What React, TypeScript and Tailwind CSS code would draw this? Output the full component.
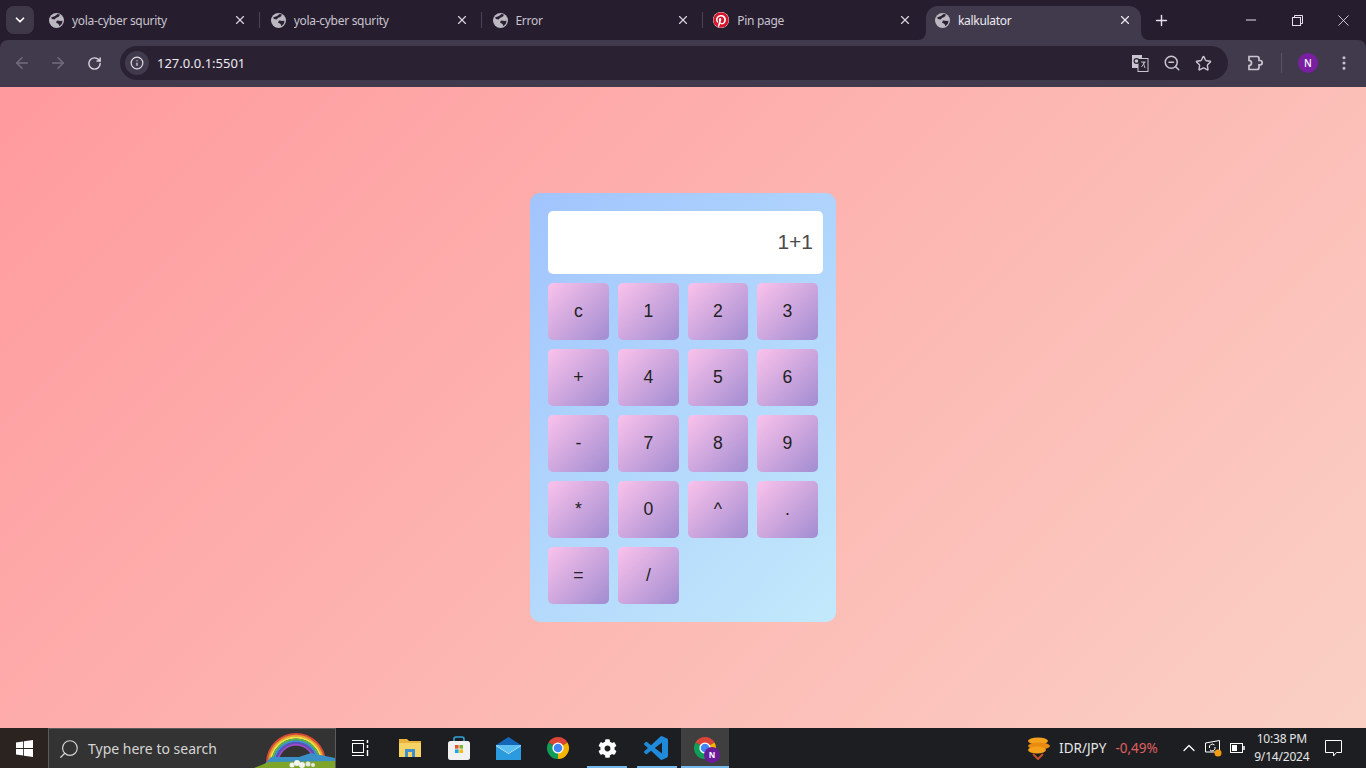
import { ArrowLeft, ArrowRight, ChevronDown, ChevronUp, EllipsisVertical, Info, Minus, Plus, RotateCw, Search, Star, X, ZoomOut } from "lucide-react";
import { FaCog, FaPinterest } from "react-icons/fa";

const keys = ["c", "1", "2", "3", "+", "4", "5", "6", "-", "7", "8", "9", "*", "0", "^", ".", "=", "/"];

const Globe = () => (
  <svg width="15" height="15" viewBox="0 0 15 15" className="shrink-0">
    <circle cx="7.5" cy="7.5" r="7.5" fill="#bcb8c2" />
    <path d="M2 4.5 L6 3 L8.5 1 L11 1.5 L10 3.5 L7 5 L5.5 6.5 L3 6 Z" fill="#2a2233" />
    <path d="M8 7.5 L12 8 L13.5 7.5 L13 10.5 L10.5 13.2 L9.5 11 L7 9.5 Z" fill="#2a2233" />
  </svg>
);

const Tab = ({ title, pin, last }: { title: string; pin?: boolean; last?: boolean }) => (
  <div className={`flex h-full w-[221.75px] shrink-0 items-center text-[#c8c3cd] ${pin ? "pl-[10px]" : "pl-[11px]"}`}>
    {pin ? <FaPinterest className="shrink-0 rounded-full bg-white text-[16px] text-[#d5152b]" /> : <Globe />}
    <span className="ml-2 mt-px flex-1 truncate text-xs tracking-[-0.3px]">{title}</span>
    <X size={14} strokeWidth={2} className="text-[#d8d4dc]" />
    <div className={`ml-3 h-4 w-px ${last ? "bg-transparent" : "bg-[#4b4456]"}`} />
  </div>
);

const TranslateIcon = () => (
  <svg width="18" height="18" viewBox="0 0 18 18">
    <rect x="1" y="1" width="10" height="13" fill="#c9c5ce" />
    <rect x="7" y="4.5" width="10" height="13" fill="#2a2233" stroke="#c9c5ce" strokeWidth="1" />
    <circle cx="5.5" cy="7" r="2.4" fill="none" stroke="#2a2233" strokeWidth="1.2" />
    <path d="M10 8 H14.5 M12 8 L14 14 M14 8 L10.5 13" stroke="#c9c5ce" strokeWidth="0.9" fill="none" />
  </svg>
);

const TabBar = () => (
  <div className="flex h-10 shrink-0 bg-[#261d2f]">
    <div className="ml-[6px] mr-1 mt-[6px] flex h-7 w-7 items-center justify-center rounded-lg bg-[#3f3849] text-white">
      <ChevronDown size={14} strokeWidth={3} />
    </div>
    <div className="flex h-10 items-center">
      <Tab title="yola-cyber squrity" />
      <Tab title="yola-cyber squrity" />
      <Tab title="Error" />
      <Tab title="Pin page" pin last />
    </div>
    <div className="relative ml-px mt-[6px] flex h-[34px] w-[215px] items-center rounded-t-xl bg-[#413a4c] pb-[6px] pl-[9px] pr-[9px] text-[#eeeaf1]">
      <div className="absolute -left-2 bottom-0 h-2 w-2 bg-[#413a4c]">
        <div className="h-full w-full rounded-br-lg bg-[#261d2f]" />
      </div>
      <div className="absolute -right-2 bottom-0 h-2 w-2 bg-[#413a4c]">
        <div className="h-full w-full rounded-bl-lg bg-[#261d2f]" />
      </div>
      <Globe />
      <span className="ml-2 mt-px flex-1 text-xs tracking-[-0.3px]">kalkulator</span>
      <X size={14} strokeWidth={2} />
    </div>
    <div className="flex h-10 flex-1 items-center pl-[12px] text-[#e6e2ea]">
      <Plus size={17} strokeWidth={2} />
      <div className="flex-1" />
      <div className="flex w-[46px] justify-center">
        <Minus size={16} strokeWidth={1.5} />
      </div>
      <div className="flex w-[46px] justify-center">
        <svg width="11" height="11" viewBox="0 0 11 11" fill="none" stroke="currentColor">
          <rect x="0.5" y="2.5" width="8" height="8" />
          <path d="M2.5 2.5 V0.5 H10.5 V8.5 H8.5" />
        </svg>
      </div>
      <div className="flex w-[46px] justify-center">
        <X size={19} strokeWidth={1.1} />
      </div>
    </div>
  </div>
);

const Toolbar = () => (
  <div className="flex h-[47px] shrink-0 items-center rounded-t-lg bg-[#413a4c] pb-px text-[#c9c5ce]">
    <div className="flex w-[120px] items-center pl-[13px]">
      <ArrowLeft size={18} className="text-[#726c7b]" />
      <ArrowRight size={18} className="ml-[18px] text-[#726c7b]" />
      <RotateCw size={15} strokeWidth={2.2} className="ml-[20px] text-[#dcd8e0]" />
    </div>
    <div className="flex h-[34px] w-[1108px] items-center rounded-full bg-[#2a2233] pl-[5px]">
      <div className="flex h-6 w-6 items-center justify-center rounded-full bg-[#413a4c]">
        <Info size={14} className="text-[#e3dfe7]" />
      </div>
      <span className="ml-2 mt-px flex-1 text-[13px] text-[#eeeaf1]">127.0.0.1:5501</span>
      <TranslateIcon />
      <ZoomOut size={18} className="ml-[14px]" />
      <Star size={17} strokeWidth={2} className="ml-[14px] mr-4" />
    </div>
    <svg width="18" height="18" viewBox="0 0 18 18" className="ml-[18px]" fill="none" stroke="currentColor" strokeWidth="1.7">
      <path d="M3 2.5 H11 Q13 2.5 13 4.5 V6.5 H14 a2.2 2.2 0 0 1 0 4.4 H13 V13.5 Q13 15.5 11 15.5 H3 V11.5 a2.4 2.4 0 0 0 0 -5 Z" />
    </svg>
    <div className="ml-[17px] h-5 w-px bg-[#5a5365]" />
    <div className="ml-4 flex h-5 w-5 items-center justify-center rounded-full bg-[#7b1fa2] text-[10px] font-medium text-white">N</div>
    <EllipsisVertical size={18} className="ml-[17px]" />
  </div>
);

const Calculator = () => (
  <div className="w-[306px] rounded-[10px] bg-[linear-gradient(135deg,#a1c4fd,#c2e9fb)] p-[18px] [font-family:'Liberation_Sans',Arial,sans-serif]">
    <div className="flex h-[63px] w-[275px] items-center justify-end rounded-[5px] bg-white pb-[2px] pr-[10px] text-[21px] text-[#4a4a4a]">1+1</div>
    <div className="mt-[9px] grid grid-cols-[61px_61px_60px_61px] gap-[9px]">
      {keys.map((key) => (
        <button key={key} className="flex h-[57px] items-center justify-center rounded-[5px] bg-[linear-gradient(135deg,#fbc2eb,#a18cd1)] pb-px text-[17.6px] text-[#222]">
          {key}
        </button>
      ))}
    </div>
  </div>
);

const Rainbow = () => (
  <svg width="81" height="39" viewBox="255 729 81 39" className="absolute bottom-0 right-0" fill="none">
    {["#d8483a", "#ef9a2e", "#f1e24a", "#5cb84c", "#3f8fd8", "#5b4fc0", "#9a4cc4"].map((color, i) => (
      <circle key={color} cx="297" cy="763" r={29 - i * 1.8} stroke={color} strokeWidth="2" />
    ))}
    <path d="M262 768 L272 757 L300 757 L312 753 L336 758 V768 Z" fill="#3b8fc7" />
    <path d="M255 768 L270 762 L336 761 V768 Z" fill="#7ea52a" />
    <circle cx="298" cy="763" r="3" fill="#f4f4f0" />
    <circle cx="303" cy="765" r="3" fill="#f4f4f0" />
    <circle cx="293" cy="765" r="2.5" fill="#f4f4f0" />
    <circle cx="309" cy="764" r="2.5" fill="#e9e9e2" />
    <circle cx="314" cy="765" r="2" fill="#e9e9e2" />
  </svg>
);

const ChromeIcon = ({ badge }: { badge?: boolean }) => (
  <div className="relative h-6 w-6">
    <svg width="24" height="24" viewBox="0 0 24 24">
      <path d="M12 12 L2.47 6.5 A11 11 0 0 1 21.53 6.5 Z" fill="#db4437" />
      <path d="M12 12 L21.53 6.5 A11 11 0 0 1 12 23 Z" fill="#f4b400" />
      <path d="M12 12 L12 23 A11 11 0 0 1 2.47 6.5 Z" fill="#0f9d58" />
      <circle cx="12" cy="12" r="5.6" fill="#fff" />
      <circle cx="12" cy="12" r="4.3" fill="#4285f4" />
    </svg>
    {badge && (
      <div className="absolute -bottom-[3px] -right-[3px] flex h-4 w-4 items-center justify-center rounded-full bg-[#6a1b9a] text-[8px] font-bold text-white">N</div>
    )}
  </div>
);

const TaskCell = ({ children, open }: { children: React.ReactNode; open?: boolean }) => (
  <div className="relative flex h-full w-[49.3px] shrink-0 items-center justify-center">
    {children}
    {open && <div className="absolute bottom-0 left-[5px] h-[2px] w-10 bg-[#76b9ed]" />}
  </div>
);

const Taskbar = () => (
  <div className="flex h-10 shrink-0 items-center bg-[#1d1e22] text-white">
    <div className="flex h-full w-12 items-center justify-center bg-[#2a2320]">
      <svg width="17" height="17" viewBox="0 0 17 17" fill="#fff">
        <path d="M0 2.4 L7.2 1.4 V8 H0 Z M8 1.3 L17 0 V8 H8 Z M0 9 H7.2 V15.6 L0 14.6 Z M8 9 H17 V17 L8 15.7 Z" />
      </svg>
    </div>
    <div className="relative flex h-full w-[288px] items-center border border-b-0 border-[#5a5a5a] bg-[#333] pl-[9px] text-[#d5d5d5]">
      <Search size={22} strokeWidth={1.3} className="-scale-x-100" />
      <span className="ml-2 text-sm">Type here to search</span>
      <Rainbow />
    </div>
    <TaskCell>
      <svg width="17" height="16" viewBox="0 0 17 16" fill="none" stroke="#fff">
        <path d="M0 0.5 H12 M0 15.5 H12" />
        <rect x="0.5" y="3.5" width="11" height="9" />
        <path d="M15.5 0 V3 M15.5 5 V8 M15.5 10 V16" strokeWidth="1.4" />
      </svg>
    </TaskCell>
    <TaskCell>
      <svg width="22" height="20" viewBox="0 0 22 20">
        <path d="M0 1 H8 L10 3 H22 V19 H0 Z" fill="#e9b23c" />
        <path d="M0 5 H22 V19 H0 Z" fill="#f6d365" />
        <path d="M6 19 V11 H16 V19 H13 V14 H9 V19 Z" fill="#3f8fd0" />
      </svg>
    </TaskCell>
    <TaskCell>
      <svg width="22" height="24" viewBox="0 0 22 24">
        <path d="M6 6 V3 Q6 1 8 1 H14 Q16 1 16 3 V6" fill="none" stroke="#35a3dc" strokeWidth="1.6" />
        <rect x="0" y="5" width="22" height="19" rx="2.5" fill="#f1f1f1" />
        <rect x="7" y="9" width="3.6" height="3.6" fill="#e8522e" />
        <rect x="11.4" y="9" width="3.6" height="3.6" fill="#7bb52b" />
        <rect x="7" y="13.4" width="3.6" height="3.6" fill="#1fa3e8" />
        <rect x="11.4" y="13.4" width="3.6" height="3.6" fill="#f5b90f" />
      </svg>
    </TaskCell>
    <TaskCell>
      <svg width="25" height="23" viewBox="0 0 25 23">
        <path d="M0 8 L12.5 0 L25 8 V10 H0 Z" fill="#1565b8" />
        <rect x="0" y="8" width="25" height="15" fill="#2b9be0" />
        <path d="M0 8 L12.5 16 L25 8 V9 L12.5 17 L0 9 Z" fill="#d7effb" />
        <path d="M0 8 L12.5 16 L25 8 Z" fill="#5cc1f2" />
      </svg>
    </TaskCell>
    <TaskCell>
      <ChromeIcon />
    </TaskCell>
    <TaskCell open>
      <FaCog size={19} />
    </TaskCell>
    <TaskCell open>
      <svg width="24" height="24" viewBox="0 0 24 24" fill="#1f8ad9">
        <path d="M23.15 2.587L18.21.21a1.494 1.494 0 0 0-1.705.29l-9.46 8.63-4.12-3.128a.999.999 0 0 0-1.276.057L.327 7.261A1 1 0 0 0 .326 8.74L3.899 12 .326 15.26a1 1 0 0 0 .001 1.479L1.65 17.94a.999.999 0 0 0 1.276.057l4.12-3.128 9.46 8.63a1.492 1.492 0 0 0 1.704.29l4.942-2.377A1.5 1.5 0 0 0 24 20.06V3.939a1.5 1.5 0 0 0-.85-1.352zm-5.146 14.861L10.826 12l7.178-5.448v10.896z" />
      </svg>
    </TaskCell>
    <div className="relative flex h-full w-12 shrink-0 items-center justify-center bg-[#3f3f3f]">
      <ChromeIcon badge />
      <div className="absolute bottom-0 left-0 right-0 h-[2px] bg-[#76b9ed]" />
    </div>
    <div className="flex h-full flex-1 items-center pl-[297px]">
      <svg width="24" height="24" viewBox="0 0 24 24" className="shrink-0">
        <ellipse cx="12" cy="5" rx="10" ry="3.5" fill="#f5a11c" />
        <ellipse cx="13" cy="10" rx="11" ry="3.5" fill="#e98b12" />
        <ellipse cx="11" cy="14" rx="9" ry="3.5" fill="#f5a11c" />
        <path d="M7 18 L12 23 L17 18" fill="none" stroke="#c6502a" strokeWidth="2" />
      </svg>
      <span className="ml-[9px] text-[13.5px] text-[#e6e6e6]">IDR/JPY</span>
      <span className="ml-[9px] text-[13.5px] text-[#e0605f]">-0,49%</span>
      <ChevronUp size={20} strokeWidth={1.5} className="ml-[21px] shrink-0" />
      <svg width="18" height="18" viewBox="0 0 18 18" className="ml-[5px] shrink-0" fill="none" stroke="#fff">
        <path d="M1.5 4 L15.5 1.5 V13 H1.5 Z" />
        <path d="M5.5 9 A3 3 0 0 1 10.5 6 M11 8 A3 3 0 0 1 6 11" />
        <circle cx="14" cy="14" r="3.5" fill="#f39c12" stroke="none" />
      </svg>
      <svg width="15" height="10" viewBox="0 0 15 10" className="ml-[8px] shrink-0" fill="none" stroke="#fff">
        <rect x="0.5" y="0.5" width="12" height="9" />
        <rect x="2" y="2" width="5" height="6" fill="#fff" stroke="none" />
        <path d="M14 3 V7" strokeWidth="1.5" />
      </svg>
      <div className="ml-[7px] flex w-[60px] shrink-0 flex-col items-center text-xs leading-[18px] tracking-[-0.2px] text-[#e6e6e6]">
        <span>10:38 PM</span>
        <span>9/14/2024</span>
      </div>
      <svg width="17" height="17" viewBox="0 0 17 17" className="ml-[13px] shrink-0" fill="none" stroke="#fff">
        <path d="M0.5 0.5 H16.5 V12.5 H11.5 L8.5 16 V12.5 H0.5 Z" />
      </svg>
    </div>
  </div>
);

export default function App() {
  return (
    <div className="flex h-screen flex-col overflow-hidden bg-[#261d2f] [font-family:'Noto_Sans',sans-serif]">
      <TabBar />
      <Toolbar />
      <main className="flex flex-1 items-center justify-center bg-[linear-gradient(135deg,#ff9a9e,#fad0c4)]">
        <Calculator />
      </main>
      <Taskbar />
    </div>
  );
}
